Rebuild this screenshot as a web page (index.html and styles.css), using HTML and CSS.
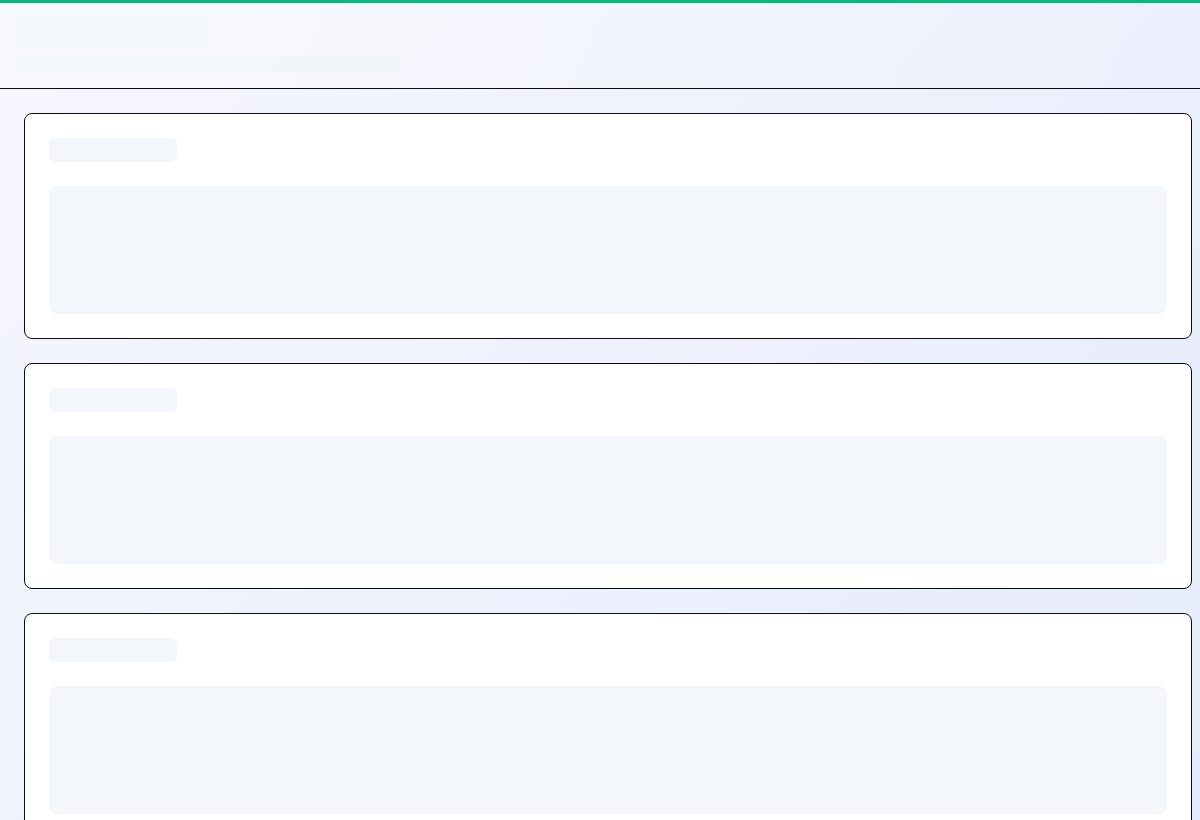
FILE: index.html
```html
<!DOCTYPE html>
<html lang="en">
<head>
<meta charset="utf-8">
<title>Loading</title>
<link rel="stylesheet" href="styles.css">
</head>
<body>
<div class="page">
  <header class="header">
    <div class="sk sk-title"></div>
    <div class="sk sk-sub"></div>
  </header>
  <main class="main">
    <section class="card">
      <div class="sk sk-card-title"></div>
      <div class="sk sk-block"></div>
    </section>
    <section class="card">
      <div class="sk sk-card-title"></div>
      <div class="sk sk-block"></div>
    </section>
    <section class="card">
      <div class="sk sk-card-title"></div>
      <div class="sk sk-block"></div>
    </section>
  </main>
</div>
</body>
</html>
```
FILE: styles.css
```css
html, body {
  margin: 0;
  padding: 0;
  height: 100%;
  overflow: hidden;
}
body {
  font-family: "Inter", "Liberation Sans", sans-serif;
  background: linear-gradient(135deg, #f6f7fd 0%, #eef1fc 50%, #e6ebfb 100%);
}
.page {
  border-top: 3px solid #10b47f;
  min-height: 100%;
}
.header {
  padding: 13px 16px 16px;
  border-bottom: 1px solid #0b0b14;
  display: flex;
  flex-direction: column;
  gap: 8px;
  background: linear-gradient(110deg, rgba(255,255,255,0.35), rgba(255,255,255,0));
}
.sk {
  background: #f3f6fa;
  border-radius: 6px;
}
.header .sk {
  background: rgba(241, 245, 249, 0.7);
}
.sk-title {
  width: 192px;
  height: 32px;
}
.sk-sub {
  width: 384px;
  height: 16px;
}
.main {
  padding: 24px 8px 24px 24px;
  display: flex;
  flex-direction: column;
  gap: 24px;
}
.card {
  background: #ffffff;
  border: 1px solid #0b0b1a;
  border-radius: 8px;
  padding: 24px;
  display: flex;
  flex-direction: column;
  gap: 24px;
}
.sk-card-title {
  width: 128px;
  height: 24px;
}
.sk-block {
  height: 128px;
  border-radius: 8px;
}
```
